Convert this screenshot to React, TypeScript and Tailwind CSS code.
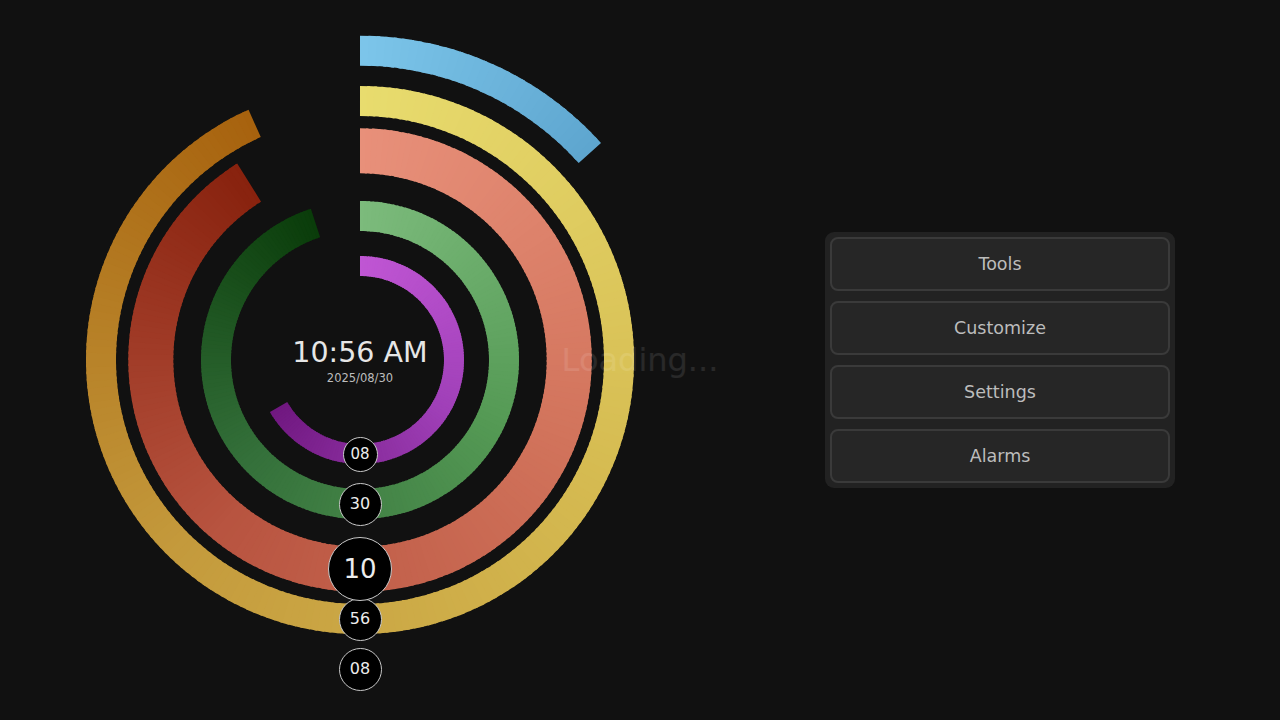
import React from 'react'

type Ring = {
  r: number
  w: number
  angle: number
  stops: string[]
  label: string
  size: number
  font: number
}

// outermost first: seconds, minutes, hours, day, month
const rings: Ring[] = [
  { r: 309.3, w: 30, angle: 48, stops: ['#7cc5ea', '#5ea5cf'], label: '08', size: 43, font: 16 },
  { r: 259, w: 30, angle: 336, stops: ['#e8dc6e', '#d6bc52', '#c49a3c', '#a7620e'], label: '56', size: 43, font: 16 },
  { r: 209.2, w: 45, angle: 328, stops: ['#e8907a', '#d2745c', '#b85440', '#88220e'], label: '10', size: 64, font: 26 },
  { r: 144, w: 30, angle: 342, stops: ['#7cbb7c', '#559a55', '#34703a', '#0a3c0a'], label: '30', size: 43, font: 16 },
  { r: 94, w: 20, angle: 240, stops: ['#c056d4', '#a040b8', '#701880'], label: '08', size: 35, font: 15 },
]

const hex = (c: string) => [1, 3, 5].map(i => parseInt(c.slice(i, i + 2), 16))

function mix(stops: string[], t: number) {
  const seg = (stops.length - 1) * t
  const i = Math.min(Math.floor(seg), stops.length - 2)
  const f = seg - i
  const a = hex(stops[i])
  const b = hex(stops[i + 1])
  const c = a.map((v, k) => Math.round(v + (b[k] - v) * f))
  return `rgb(${c[0]},${c[1]},${c[2]})`
}

const pt = (r: number, deg: number) => {
  const a = (deg * Math.PI) / 180
  return [360 + r * Math.sin(a), 360 - r * Math.cos(a)]
}

function Arc({ ring }: { ring: Ring }) {
  const step = 1.5
  const n = Math.ceil(ring.angle / step)
  const parts = []
  for (let i = 0; i < n; i++) {
    const a0 = i * step
    const a1 = Math.min(a0 + step + 0.6, ring.angle)
    const [x0, y0] = pt(ring.r, a0)
    const [x1, y1] = pt(ring.r, a1)
    parts.push(
      <path
        key={i}
        d={`M ${x0} ${y0} A ${ring.r} ${ring.r} 0 0 1 ${x1} ${y1}`}
        stroke={mix(ring.stops, (a0 + step / 2) / ring.angle)}
        strokeWidth={ring.w}
        fill="none"
      />
    )
  }
  return <g>{parts}</g>
}

const menu = ['Tools', 'Customize', 'Settings', 'Alarms']

export default function App() {
  return (
    <div
      className="relative flex h-[720px] w-[1280px] overflow-hidden bg-[#111111]"
      style={{ fontFamily: '"DejaVu Sans", Verdana, sans-serif' }}
    >
      {/* clock */}
      <div className="relative h-[720px] w-[720px] shrink-0">
        <svg width={720} height={720} className="absolute left-0 top-0">
          {rings.map((ring, i) => (
            <Arc key={i} ring={ring} />
          ))}
        </svg>

        <div className="absolute left-0 top-[335px] flex w-[720px] flex-col items-center">
          <div className="text-[28.5px] leading-[36px] text-[#e6e6e6]">10:56 AM</div>
          <div className="text-[11.5px] leading-[14px] text-[#bdbdbd]">2025/08/30</div>
        </div>

        {rings.map((ring, i) => (
          <div
            key={i}
            className="absolute flex items-center justify-center rounded-full border border-[#c8c8c8] bg-black text-[#ededed]"
            style={{
              width: ring.size,
              height: ring.size,
              left: 360 - ring.size / 2,
              top: 360 + ring.r - ring.size / 2,
              fontSize: ring.font,
            }}
          >
            {ring.label}
          </div>
        ))}
      </div>

      {/* menu */}
      <div className="flex flex-1 items-center justify-center">
        <div className="flex w-[350px] flex-col gap-[10px] rounded-[9px] bg-[#222222] p-[5px]">
          {menu.map(m => (
            <button
              key={m}
              className="flex h-[54px] items-center justify-center rounded-[8px] border-2 border-[#3a3a3a] bg-[#262626] text-[17.5px] text-[#bcbcbc]"
            >
              {m}
            </button>
          ))}
        </div>
      </div>

      <div className="pointer-events-none absolute left-0 top-[340px] w-[1280px] text-center text-[32px] leading-[40px] text-white/10">
        Loading...
      </div>
    </div>
  )
}
